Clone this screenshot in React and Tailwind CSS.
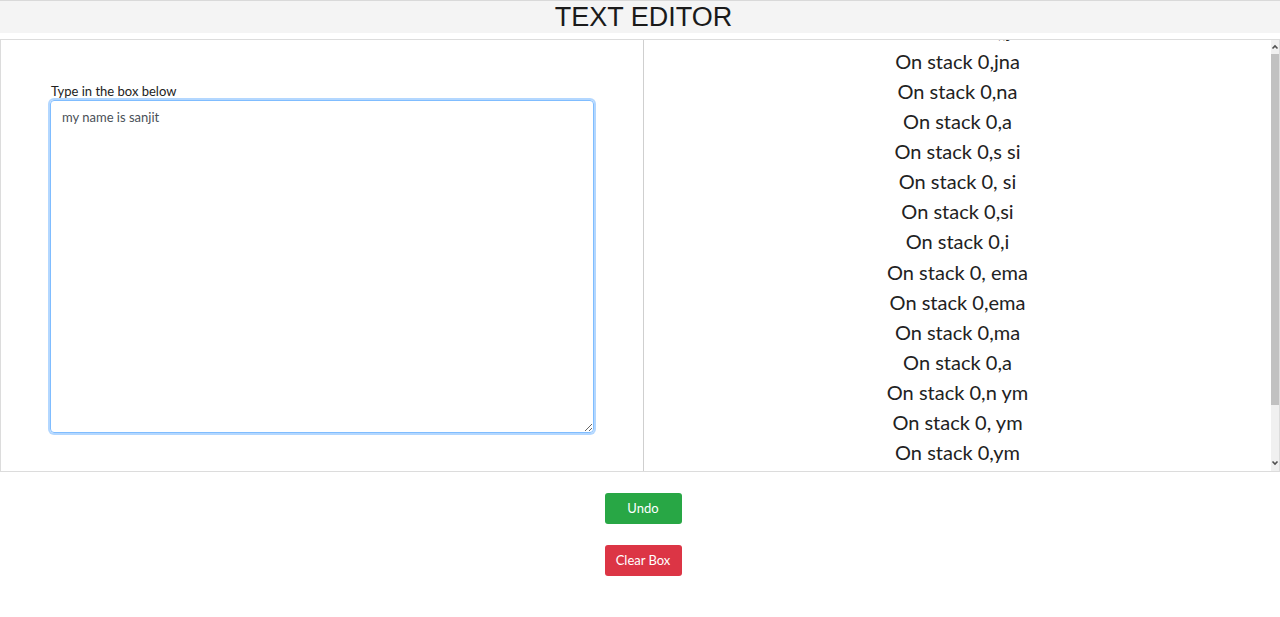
import { useEffect, useRef, useState } from 'react';

const history = [
  'tij', 'ij', 'j', ',j', 'jna', 'na', 'a', 's si', ' si', 'si', 'i', ' ema', 'ema', 'ma', 'a', 'n ym', ' ym', 'ym',
];

export default function App() {
  const [text, setText] = useState('my name is sanjit');
  const listRef = useRef(null);
  const areaRef = useRef(null);

  useEffect(() => {
    if (listRef.current) listRef.current.scrollTop = listRef.current.scrollHeight;
    if (areaRef.current) areaRef.current.focus();
  }, []);

  return (
    <div className="min-h-screen bg-white" style={{ fontFamily: 'Lato, "Open Sans", sans-serif' }}>
      {/* Header */}
      <div className="h-[33px] bg-[#f4f4f4] border-t border-[#d9d9d9] flex items-center justify-center">
        <h1 className="text-[27px] leading-none text-[#1a1a1a] ml-[7px]" style={{ fontFamily: '"Liberation Sans", Arial, sans-serif' }}>
          TEXT EDITOR
        </h1>
      </div>

      {/* Panels */}
      <div className="mt-[6px] h-[433px] border border-[#dcdcdc] flex">
        <div className="w-[643px] border-r border-[#cfcfcf] pl-[49px] pt-[44px]">
          <label className="block text-[13px] leading-[16px] text-[#222] ml-[1px] -mt-[1px]">Type in the box below</label>
          <textarea
            ref={areaRef}
            value={text}
            onChange={(e) => setText(e.target.value)}
            className="block mt-[1px] w-[544px] h-[333px] px-[11px] py-[7px] text-[13px] text-[#495057] rounded-[4px] border border-[#80bdff] shadow-[0_0_0_2px_rgba(128,189,255,0.6)] outline-none resize"
          />
        </div>
        <div
          ref={listRef}
          className="flex-1 overflow-y-scroll [scrollbar-width:none] [&::-webkit-scrollbar]:hidden"
        >
          {history.map((h, i) => (
            <div key={i} className="h-[30.15px] flex items-center justify-center text-[20px] text-[#222]">
              On stack 0,{h}
            </div>
          ))}
          <div className="h-[3px]" />
        </div>
        {/* scrollbar */}
        <div className="w-[8px] bg-[#f0f0f0] flex flex-col items-center">
          <svg width="8" height="10" viewBox="0 0 8 10" className="mt-[2px]">
            <path d="M1.5 6.5 L4 4 L6.5 6.5" stroke="#505050" strokeWidth="1.6" fill="none" />
          </svg>
          <div className="w-full h-[351px] mt-[2px] bg-[#c1c1c1]" />
          <div className="flex-1" />
          <svg width="8" height="10" viewBox="0 0 8 10" className="mb-[3px]">
            <path d="M1.5 3.5 L4 6 L6.5 3.5" stroke="#505050" strokeWidth="1.6" fill="none" />
          </svg>
        </div>
      </div>

      {/* Buttons */}
      <div className="flex flex-col items-center gap-[21px] pt-[21px] pl-[6px]">
        <button className="w-[77px] h-[31px] rounded-[3px] bg-[#28a745] text-white text-[13px]">Undo</button>
        <button className="w-[77px] h-[31px] rounded-[3px] bg-[#dc3545] text-white text-[13px]">Clear Box</button>
      </div>
    </div>
  );
}
